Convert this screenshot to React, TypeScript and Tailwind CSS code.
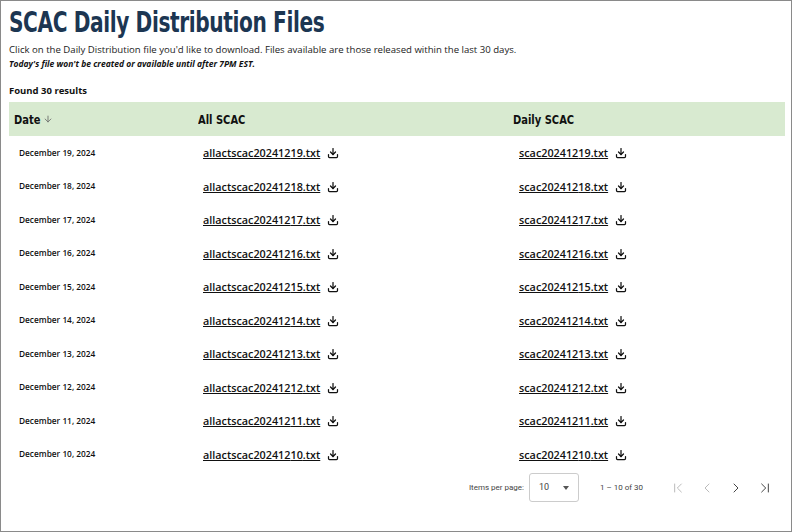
import { ArrowDown, Download, ChevronLeft, ChevronRight, ChevronFirst, ChevronLast } from 'lucide-react';

const days = [19, 18, 17, 16, 15, 14, 13, 12, 11, 10];
const cond = { fontFamily: '"DejaVu Sans Condensed", "Liberation Sans", sans-serif' };

const App = () => {
    return (
        <div className="w-[792px] h-[532px] border border-[#8a8a8a] bg-white text-[#111] overflow-hidden" style={{ fontFamily: '"Open Sans", sans-serif' }}>
            <div className="px-[8px] pt-[6px]">
                <h1 className="text-[28px] leading-[32px] font-semibold text-[#1c3652] tracking-[-0.5px] scale-x-[0.8] origin-left whitespace-nowrap" style={cond}>SCAC Daily Distribution Files</h1>
                <p className="text-[9.6px] mt-[4px] text-[#222]">Click on the Daily Distribution file you'd like to download. Files available are those released within the last 30 days.</p>
                <p className="text-[8.5px] italic font-bold mt-[1px]">Today's file won't be created or available until after 7PM EST.</p>
                <p className="text-[9.5px] font-bold mt-[13px]">Found 30 results</p>

                {/* table */}
                <div className="mt-[4px] w-[776px]">
                    <div className="flex items-center h-[34px] bg-[#d8ead0] text-[13px] font-bold" style={cond}>
                        <div className="w-[189px] pl-[5px] flex items-center gap-[3px]"><span className="scale-x-[0.85] origin-left">Date</span> <ArrowDown className="w-[10px] h-[10px] text-[#666] -ml-[5px]" /></div>
                        <div className="w-[315px]"><span className="inline-block scale-x-[0.85] origin-left">All SCAC</span></div>
                        <div><span className="inline-block scale-x-[0.85] origin-left">Daily SCAC</span></div>
                    </div>
                    {days.map((d) => (
                        <div key={d} className="flex items-center h-[33.5px]">
                            <div className="w-[194px] pl-[10px] text-[8.3px] font-semibold">December {d}, 2024</div>
                            <div className="w-[316px] flex items-center gap-[7px] text-[10.8px] font-semibold">
                                <span className="underline">allactscac202412{d}.txt</span>
                                <Download className="w-[12px] h-[12px]" strokeWidth={2.5} />
                            </div>
                            <div className="flex items-center gap-[7px] text-[10.8px] font-semibold">
                                <span className="underline">scac202412{d}.txt</span>
                                <Download className="w-[12px] h-[12px]" strokeWidth={2.5} />
                            </div>
                        </div>
                    ))}
                </div>

                {/* pagination */}
                <div className="flex items-center justify-end mt-[2px] pr-[10px] text-[8px] text-[#444]" style={{ fontFamily: 'Roboto, sans-serif' }}>
                    <span>Items per page:</span>
                    <div className="ml-[5px] w-[50px] h-[29px] border border-[#ccc] rounded-[3px] flex items-center justify-between px-[9px]">
                        <span className="text-[9px]">10</span>
                        <span className="w-0 h-0 border-l-[3.5px] border-r-[3.5px] border-t-[4px] border-l-transparent border-r-transparent border-t-[#555]" />
                    </div>
                    <span className="ml-[21px] w-[60px]">1 – 10 of 30</span>
                    <div className="flex items-center gap-[13px] ml-[10px]">
                        <ChevronFirst className="w-[16px] h-[16px] text-[#bbb]" strokeWidth={1.5} />
                        <ChevronLeft className="w-[16px] h-[16px] text-[#bbb]" strokeWidth={1.5} />
                        <ChevronRight className="w-[16px] h-[16px] text-[#444]" strokeWidth={1.5} />
                        <ChevronLast className="w-[16px] h-[16px] text-[#444]" strokeWidth={1.5} />
                    </div>
                </div>
            </div>
        </div>
    );
};

export default App;
